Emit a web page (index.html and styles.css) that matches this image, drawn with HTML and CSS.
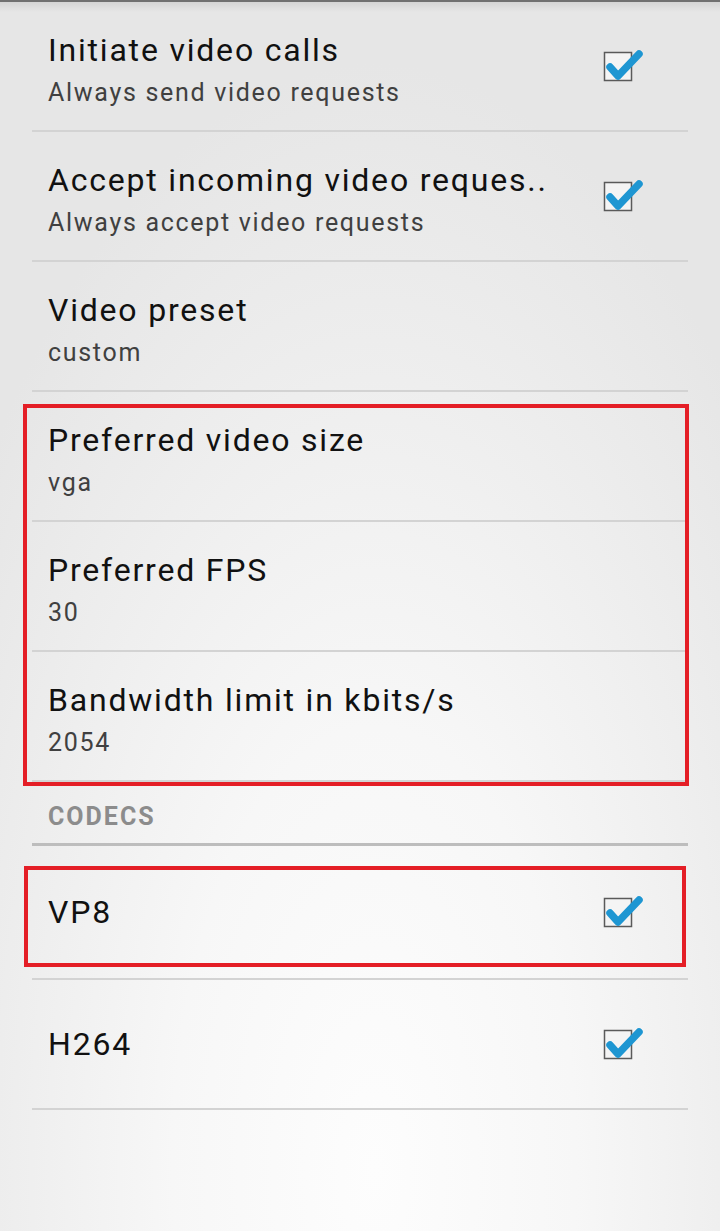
FILE: index.html
```html
<!DOCTYPE html>
<html>
<head>
<meta charset="utf-8">
<link rel="stylesheet" href="styles.css">
</head>
<body>
<div class="screen">
  <div class="pref">
    <div class="text">
      <div class="title">Initiate video calls</div>
      <div class="summary">Always send video requests</div>
    </div>
    <svg class="check" width="44" height="40" viewBox="0 0 44 40"><rect x="4.5" y="6.5" width="27" height="28" fill="#f4f4f4" stroke="#5a5a5a" stroke-width="1.5"/><path d="M10 21 L18 30 L39 8" fill="none" stroke="#1e96d2" stroke-width="7.5" stroke-linecap="round" stroke-linejoin="round"/></svg>
  </div>
  <div class="pref">
    <div class="text">
      <div class="title">Accept incoming video reques..</div>
      <div class="summary">Always accept video requests</div>
    </div>
    <svg class="check" width="44" height="40" viewBox="0 0 44 40"><rect x="4.5" y="6.5" width="27" height="28" fill="#f4f4f4" stroke="#5a5a5a" stroke-width="1.5"/><path d="M10 21 L18 30 L39 8" fill="none" stroke="#1e96d2" stroke-width="7.5" stroke-linecap="round" stroke-linejoin="round"/></svg>
  </div>
  <div class="pref">
    <div class="text">
      <div class="title">Video preset</div>
      <div class="summary">custom</div>
    </div>
  </div>
  <div class="boxed box-video">
    <div class="pref">
      <div class="text">
        <div class="title">Preferred video size</div>
        <div class="summary">vga</div>
      </div>
    </div>
    <div class="pref">
      <div class="text">
        <div class="title">Preferred FPS</div>
        <div class="summary">30</div>
      </div>
    </div>
    <div class="pref">
      <div class="text">
        <div class="title">Bandwidth limit in kbits/s</div>
        <div class="summary">2054</div>
      </div>
    </div>
  </div>
  <div class="category">CODECS</div>
  <div class="boxed box-vp8">
    <div class="pref single first">
      <div class="title">VP8</div>
      <svg class="check" width="44" height="40" viewBox="0 0 44 40"><rect x="4.5" y="6.5" width="27" height="28" fill="#f4f4f4" stroke="#5a5a5a" stroke-width="1.5"/><path d="M10 21 L18 30 L39 8" fill="none" stroke="#1e96d2" stroke-width="7.5" stroke-linecap="round" stroke-linejoin="round"/></svg>
    </div>
  </div>
  <div class="pref single">
    <div class="title">H264</div>
    <svg class="check" width="44" height="40" viewBox="0 0 44 40"><rect x="4.5" y="6.5" width="27" height="28" fill="#f4f4f4" stroke="#5a5a5a" stroke-width="1.5"/><path d="M10 21 L18 30 L39 8" fill="none" stroke="#1e96d2" stroke-width="7.5" stroke-linecap="round" stroke-linejoin="round"/></svg>
  </div>
</div>
</body>
</html>
```

FILE: styles.css
```css
html, body {
  margin: 0;
  padding: 0;
}
body {
  width: 720px;
  height: 1231px;
  overflow: hidden;
  font-family: Roboto, "Noto Sans", sans-serif;
}
.screen {
  box-sizing: border-box;
  width: 720px;
  height: 1231px;
  border-top: 2px solid #707070;
  background:
    linear-gradient(to bottom, rgba(0,0,0,0.08), rgba(0,0,0,0) 10px),
    radial-gradient(ellipse 70% 90% at 52% 95%, #fdfdfd 0%, #f7f7f7 40%, #ededed 75%, #e6e6e6 100%);
}
.pref {
  box-sizing: border-box;
  height: 130px;
  margin: 0 32px;
  padding: 0 44px 0 16px;
  border-bottom: 2px solid #d3d3d3;
  display: flex;
  justify-content: space-between;
  align-items: flex-start;
}
.text {
  padding-top: 28px;
}
.title {
  font-size: 32px;
  line-height: 40px;
  letter-spacing: 1.8px;
  color: #111;
  white-space: nowrap;
}
.summary {
  margin-top: 3px;
  font-size: 25px;
  line-height: 40px;
  letter-spacing: 1.7px;
  color: #404040;
}
.check {
  align-self: center;
  display: block;
}
.pref.single {
  align-items: center;
}
.pref.first {
  height: 134px;
}
.boxed {
  position: relative;
}
.boxed::after {
  content: "";
  position: absolute;
  border: 4px solid #e41e26;
  pointer-events: none;
}
.box-video::after {
  top: 12px;
  bottom: -4px;
  left: 23px;
  right: 31px;
}
.box-vp8::after {
  top: 20px;
  bottom: 13px;
  left: 24px;
  right: 34px;
}
.category {
  box-sizing: border-box;
  height: 64px;
  margin: 0 32px;
  padding: 23px 0 0 16px;
  border-bottom: 3px solid #bdbdbd;
  font-size: 25px;
  line-height: 24px;
  letter-spacing: 2px;
  font-weight: bold;
  color: #8c8c8c;
}
```
